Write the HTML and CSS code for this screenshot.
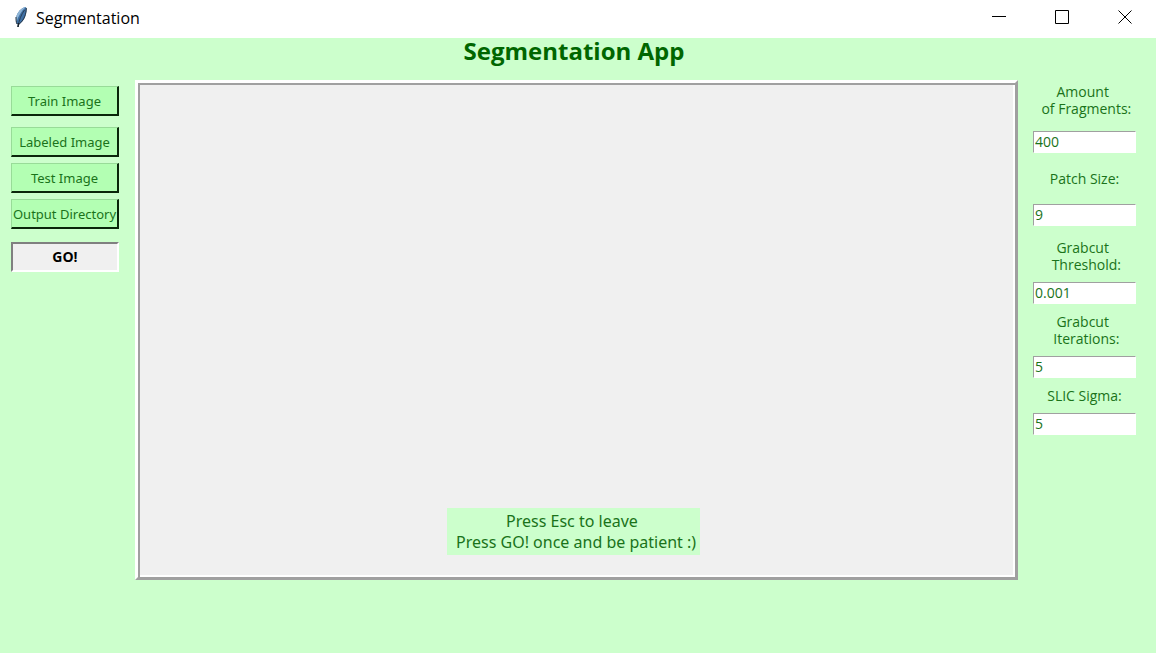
FILE: index.html
```html
<!DOCTYPE html>
<html lang="en">
<head>
<meta charset="utf-8">
<title>Segmentation</title>
<link rel="stylesheet" href="styles.css">
</head>
<body>
<header class="titlebar">
  <svg class="feather" width="14" height="22" viewBox="0 0 14 22" aria-hidden="true">
    <path d="M12 1C8 1 3 6 2 12c0 3 0 5 1 6l2 .5C10 15 12 10 12.500 4z" fill="#3f71a6"/>
    <path d="M12 1C8 1 3 6 2 12l.5 4C4 11 7 5 12 1z" fill="#8fb5d6"/>
    <path d="M12.300 2c0 6-2 12-7.500 16.500M2 11c0 3 0 5 1 7" fill="none" stroke="#253443" stroke-width="1"/>
    <path d="M10.500 4C7 9 5 14 4 21" fill="none" stroke="#2a3f55" stroke-width="1"/>
    <path d="M4.500 17L4 21" fill="none" stroke="#18222c" stroke-width="1.500"/>
  </svg>
  <span class="window-name">Segmentation</span>
  <div class="window-controls">
    <button class="window-button" aria-label="Minimize"><svg width="14" height="14" viewBox="0 0 14 14"><path d="M0 6.500h14"/></svg></button>
    <button class="window-button" aria-label="Maximize"><svg width="14" height="14" viewBox="0 0 14 14"><path d="M.5.5h13v13H.5z"/></svg></button>
    <button class="window-button" aria-label="Close"><svg width="14" height="14" viewBox="0 0 14 14"><path d="M.5.5l13 13M13.500.5l-13 13"/></svg></button>
  </div>
</header>
<h1 class="heading">Segmentation App</h1>
<main class="workspace">
  <nav class="actions">
    <button class="action action-first">Train Image</button>
    <button class="action">Labeled Image</button>
    <button class="action">Test Image</button>
    <button class="action">Output Directory</button>
    <button class="go">GO!</button>
  </nav>
  <section class="stage">
    <p class="hint">Press Esc to leave 
 Press GO! once and be patient :)</p>
  </section>
  <form class="settings">
    <div class="field field-roomy">
      <label class="label" for="fragments">Amount 
 of Fragments:</label>
      <input class="entry" id="fragments" type="text" value="400">
    </div>
    <div class="field field-spread">
      <label class="label" for="patch">Patch Size:</label>
      <input class="entry" id="patch" type="text" value="9">
    </div>
    <div class="field">
      <label class="label" for="threshold">Grabcut 
 Threshold:</label>
      <input class="entry" id="threshold" type="text" value="0.001">
    </div>
    <div class="field">
      <label class="label" for="iterations">Grabcut 
 Iterations:</label>
      <input class="entry" id="iterations" type="text" value="5">
    </div>
    <div class="field">
      <label class="label" for="sigma">SLIC Sigma:</label>
      <input class="entry" id="sigma" type="text" value="5">
    </div>
  </form>
</main>
</body>
</html>
```

FILE: styles.css
```css
* {
  box-sizing: border-box;
}

body {
  margin: 0;
  min-height: 100vh;
  display: flex;
  flex-direction: column;
  background: #ccffcc;
  color: #1a731a;
  font-family: "Open Sans", "Noto Sans", sans-serif;
  font-size: 14px;
}

button,
input {
  font: inherit;
  color: inherit;
  border-radius: 0;
}

.titlebar {
  display: flex;
  align-items: center;
  height: 38px;
  padding: 0 0 4px 14px;
  background: #ffffff;
  color: #000000;
}

.feather {
  margin-right: 8px;
}

.window-name {
  padding-top: 2px;
  font-size: 16px;
}

.window-controls {
  display: flex;
  margin-left: auto;
}

.window-button {
  display: flex;
  align-items: center;
  justify-content: center;
  width: 63px;
  height: 34px;
  padding: 0;
  border: 0;
  background: none;
}

.window-button svg {
  fill: none;
  stroke: #000000;
}

.heading {
  margin: 0;
  padding-right: 8px;
  height: 42px;
  font-size: 24px;
  line-height: 26px;
  text-align: center;
  color: #006600;
}

.workspace {
  flex: 1;
  display: grid;
  grid-template-columns: 135px 1fr 138px;
  padding-bottom: 73px;
}

.actions {
  display: flex;
  flex-direction: column;
  gap: 6px;
  padding: 6px 16px 0 11px;
}

.action,
.go {
  height: 30px;
  padding: 0;
  line-height: 26px;
  white-space: nowrap;
}

.action {
  background: #b3ffb3;
  border: solid;
  border-width: 1px 2px 2px 1px;
  border-color: #98dc98 #0a260a #0a260a #98dc98;
  font-family: "Noto Sans", sans-serif;
  font-size: 13px;
}

.action-first {
  margin-bottom: 5px;
}

.go {
  margin-top: 7px;
  background: #f0f0f0;
  color: #000000;
  font-weight: bold;
  border: 2px solid;
  border-color: #808080 #ffffff #ffffff #808080;
}

.stage {
  display: flex;
  align-items: flex-end;
  justify-content: center;
  padding: 0 6px 22px 0;
  background: #f0f0f0;
  border: 3px solid;
  border-color: #ffffff #a0a0a0 #a0a0a0 #ffffff;
  box-shadow: inset 2px 2px #a0a0a0, inset -2px -2px #ffffff;
}

.hint {
  margin: 0;
  padding: 3px 4px 2px 5px;
  background: #ccffcc;
  font-family: "Noto Sans", sans-serif;
  font-size: 16px;
  line-height: 21px;
  text-align: center;
  white-space: pre;
}

.settings {
  display: flex;
  flex-direction: column;
  gap: 9px;
  padding: 3px 20px 0 15px;
}

.field {
  display: flex;
  flex-direction: column;
  gap: 9px;
}

.field-roomy {
  gap: 14px;
}

.field-spread {
  gap: 17px;
  padding: 8px 0 4px;
}

.label {
  line-height: 17px;
  text-align: center;
  white-space: pre;
}

.entry {
  width: 100%;
  height: 22px;
  padding: 0 1px 2px;
  background: #ffffff;
  border: 1px solid;
  border-color: #a0a0a0 #ffffff #ffffff #a0a0a0;
}
```
